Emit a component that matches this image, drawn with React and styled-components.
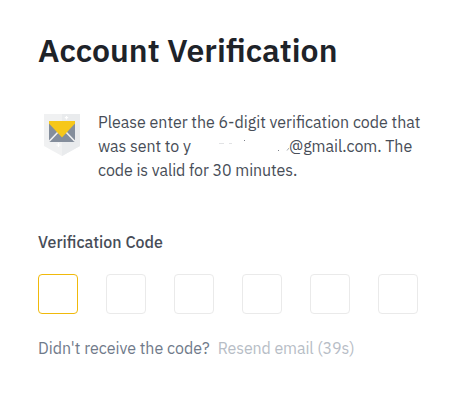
import React from 'react';
import styled, { createGlobalStyle } from 'styled-components';

const DIGITS = [0, 1, 2, 3, 4, 5];

const MailShield = () => (
  <Shield viewBox="0 0 36 42" width="36" height="42">
    <path d="M0 0h36v32L18 42 0 32z" fill="#f0f1f2" />
    <path d="M18 0h18v32L18 42z" fill="#e9ebed" />
    <path d="M5 7h26v21H5z" fill="#848e9c" />
    <path d="M5 27.500l10.500-11M31 27.500l-10.500-11" stroke="#f0f1f2" strokeWidth="1.6" />
    <path d="M5 7h26v2.500L18 23.500 5 9.500z" fill="#f6c71a" />
    <path d="M22.500 2v3.400M20.800 3.700h3.400M14.500 29v4M12.500 31h4" stroke="#fff" strokeWidth="1.2" />
  </Shield>
)

export const Verification = () => {
  return (
    <Container>
      <Heading>Account Verification</Heading>
      <Notice>
        <MailShield />
        <Message>
          <Line $spacing="-0.02px">Please enter the 6-digit verification code that</Line>
          <Line $spacing="-0.05px">
            was sent to y
            <Erased viewBox="0 0 98 24" width="98" height="24">
              <path d="M28 9.500h5M38 9.500h3" stroke="#e2e3e5" />
              <path d="M53 6.500h1M87 16.500h1" stroke="#7d8189" />
              <path d="M96 16.500l2-2.500" stroke="#a5a8ad" />
            </Erased>
            @gmail.com. The
          </Line>
          <Line $spacing="-0.07px">code is valid for 30 minutes.</Line>
        </Message>
      </Notice>
      <Label>Verification Code</Label>
      <CodeRow>
        {DIGITS.map((digit) => (
          <CodeBox key={digit} $active={digit === 0} />
        ))}
      </CodeRow>
      <Footer>
        <Question>Didn't receive the code?</Question>
        <Resend>Resend email (39s)</Resend>
      </Footer>
    </Container>
  )
}

const App = () => (
  <>
    <GlobalStyle />
    <Verification />
  </>
)

export default App;

/* Styled Components */

const GlobalStyle = createGlobalStyle`
  body {
    margin: 0;
    background: #fff;
    font-family: 'IBM Plex Sans', Roboto, sans-serif;
    font-size: 16px;
    line-height: 24px;
    font-feature-settings: 'liga' 1;
  }
`;

const Container = styled.main`
  box-sizing: border-box;
  width: 456px;
  height: 416px;
  padding: 30px 36px 0 38px;
`;

const Heading = styled.h1`
  margin: 0 0 40px;
  font-size: 32px;
  font-weight: 600;
  line-height: 40px;
  white-space: nowrap;
  color: #1e2329;
`;

const Notice = styled.section`
  display: flex;
  align-items: flex-start;
  gap: 18px;
  padding-left: 6px;
`;

const Shield = styled.svg`
  flex-shrink: 0;
  margin-top: 4px;
`;

const Message = styled.p`
  margin: 0;
  color: #474d57;
`;

const Line = styled.span`
  display: flex;
  height: 24px;
  white-space: nowrap;
  letter-spacing: ${(props) => props.$spacing};
`;

const Erased = styled.svg`
  flex-shrink: 0;
`;

const Label = styled.div`
  margin-top: 48px;
  font-weight: 500;
  color: #474d57;
`;

const CodeRow = styled.div`
  display: flex;
  gap: 28px;
  margin-top: 20px;
`;

const CodeBox = styled.div`
  box-sizing: border-box;
  width: 40px;
  height: 40px;
  border: 1px solid ${(props) => (props.$active ? '#f0b90b' : '#eaeaea')};
  border-radius: 4px;
`;

const Footer = styled.div`
  display: flex;
  gap: 8px;
  margin-top: 22px;
  white-space: nowrap;
`;

const Question = styled.span`
  color: #707a8a;
`;

const Resend = styled.span`
  color: #b7bdc6;
  letter-spacing: -0.1px;
`;
